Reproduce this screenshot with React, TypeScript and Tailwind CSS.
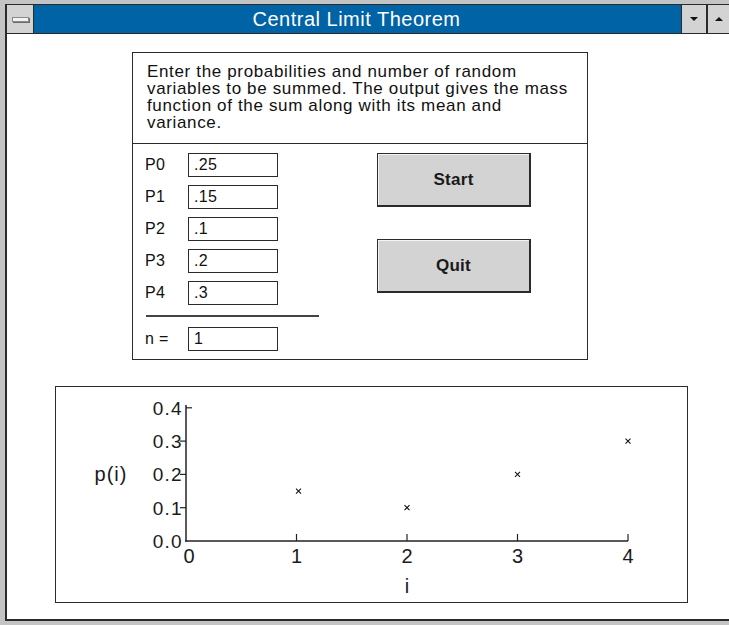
import React from "react";

const FONT = { fontFamily: '"Liberation Sans", Arial, Helvetica, sans-serif' };

const probs = [
  { label: "P0", value: ".25" },
  { label: "P1", value: ".15" },
  { label: "P2", value: ".1" },
  { label: "P3", value: ".2" },
  { label: "P4", value: ".3" },
];

// chart helpers, page coordinates
const xAt = (i: number) => 186 + i * 110.5;
const yAt = (v: number) => 541 - v * 333;

function Field({ value }: { value: string }) {
  return (
    <div className="w-[90px] h-[24px] border border-[#2b2b2b] bg-white flex items-center pl-[5px] text-[16px] tracking-[0.3px] leading-none text-[#111]">
      {value}
    </div>
  );
}

function PushButton({ label }: { label: string }) {
  return (
    <button className="w-[154px] h-[54px] bg-[#d3d3d3] border border-[#2b2b2b] border-r-2 border-b-2 shadow-[inset_1px_1px_0_#f4f4f4] flex items-center justify-center text-[17px] tracking-[0.3px] font-bold text-[#1a1a1a]">
      {label}
    </button>
  );
}

function Chart() {
  const points = [
    { i: 1, p: 0.15 },
    { i: 2, p: 0.1 },
    { i: 3, p: 0.2 },
    { i: 4, p: 0.3 },
  ];
  const yTicks = [0.4, 0.3, 0.2, 0.1, 0.0];
  return (
    <svg width="631" height="215" viewBox="56 387 631 215" className="block" style={FONT}>
      {/* axes */}
      <line x1="186" y1="405" x2="186" y2="541.5" stroke="#222" strokeWidth="1.5" />
      <line x1="185" y1="541" x2={xAt(4)} y2="541" stroke="#222" strokeWidth="1.5" />
      {yTicks.map((v) => (
        <g key={v}>
          {v === 0.4 ? (
            <line x1="186" y1={yAt(v)} x2="192" y2={yAt(v)} stroke="#222" strokeWidth="1.2" />
          ) : v > 0 ? (
            <line x1="180" y1={yAt(v)} x2="186" y2={yAt(v)} stroke="#222" strokeWidth="1.2" />
          ) : null}
          <text x="183" y={yAt(v) + 7} textAnchor="end" fontSize="19" letterSpacing="1.3" fill="#1a1a1a">
            {v.toFixed(1)}
          </text>
        </g>
      ))}
      {[0, 1, 2, 3, 4].map((i) => (
        <g key={i}>
          {i > 0 && <line x1={xAt(i)} y1="534" x2={xAt(i)} y2="541" stroke="#222" strokeWidth="1.2" />}
          <text x={xAt(i) + (i === 0 ? 3 : 0)} y="563" textAnchor="middle" fontSize="20" fill="#1a1a1a">
            {i}
          </text>
        </g>
      ))}
      <text x="111" y="481" textAnchor="middle" fontSize="20" letterSpacing="1" fill="#1a1a1a">
        p(i)
      </text>
      <text x="407" y="593" textAnchor="middle" fontSize="20" fill="#1a1a1a">
        i
      </text>
      {points.map(({ i, p }) => {
        const cx = xAt(i) + (i === 1 ? 2 : 0);
        const cy = yAt(p);
        return (
          <g key={i} stroke="#111" strokeWidth="1.1">
            <line x1={cx - 2.5} y1={cy - 2.5} x2={cx + 2.5} y2={cy + 2.5} />
            <line x1={cx - 2.5} y1={cy + 2.5} x2={cx + 2.5} y2={cy - 2.5} />
          </g>
        );
      })}
    </svg>
  );
}

export default function App() {
  return (
    <div className="w-[729px] h-[625px] overflow-hidden bg-[#c4c4c4] pt-[4px] pl-[5px] pb-[4px] flex flex-col" style={FONT}>
      <div className="flex-1 flex flex-col bg-white border-t border-l-2 border-b-2 border-[#2b2b2b]">
        {/* Title bar */}
        <div className="h-[29px] flex border-b border-[#2b2b2b] shrink-0">
          <div className="w-[27px] bg-[#d3d3d3] border-r border-[#2b2b2b] flex items-center justify-center">
            <div className="w-[17px] h-[5px] bg-[#f2f2f2] border border-[#8a8a8a] shadow-[1px_1px_0_#6a6a6a]" />
          </div>
          <div className="flex-1 bg-[#0063a5] text-white text-[20px] tracking-[0.5px] flex items-center justify-center pr-[2px]">
            Central Limit Theorem
          </div>
          <div className="w-[25px] bg-[#d3d3d3] border-l border-[#2b2b2b] flex items-center justify-center">
            <div className="w-0 h-0 border-l-[4px] border-r-[4px] border-t-[4px] border-l-transparent border-r-transparent border-t-[#111]" />
          </div>
          <div className="w-[23px] bg-[#d3d3d3] border-l-2 border-[#2b2b2b] flex items-center justify-center">
            <div className="w-0 h-0 border-l-[4px] border-r-[4px] border-b-[4px] border-l-transparent border-r-transparent border-b-[#111]" />
          </div>
        </div>

        {/* Content */}
        <div className="flex flex-col">
          <div className="ml-[125px] mt-[18px] w-[456px] h-[308px] border border-[#2b2b2b] flex flex-col">
            <div className="px-[14px] pt-[10px] pb-[12px] border-b border-[#2b2b2b] text-[17px] tracking-[0.65px] leading-[17px] text-[#111] whitespace-nowrap">
              Enter the probabilities and number of random
              <br />
              variables to be summed. The output gives the mass
              <br />
              function of the sum along with its mean and
              <br />
              variance.
            </div>
            <div className="flex pt-[9px]">
              <div className="pl-[12px] w-[244px] flex flex-col">
                <div className="flex flex-col gap-[8px]">
                  {probs.map((p) => (
                    <div key={p.label} className="flex items-center h-[24px]">
                      <span className="w-[43px] text-[16px] tracking-[0.3px] text-[#111]">{p.label}</span>
                      <Field value={p.value} />
                    </div>
                  ))}
                </div>
                <div className="mt-[10px] ml-[1px] w-[173px] h-[2px] bg-[#444]" />
                <div className="flex items-center h-[25px] mt-[9px]">
                  <span className="w-[43px] text-[16px] tracking-[0.3px] text-[#111]">n =</span>
                  <Field value="1" />
                </div>
              </div>
              <div className="flex flex-col gap-[32px]">
                <PushButton label="Start" />
                <PushButton label="Quit" />
              </div>
            </div>
          </div>

          <div className="ml-[48px] mt-[26px] w-[633px] h-[217px] border border-[#2b2b2b]">
            <Chart />
          </div>
        </div>
      </div>
    </div>
  );
}
